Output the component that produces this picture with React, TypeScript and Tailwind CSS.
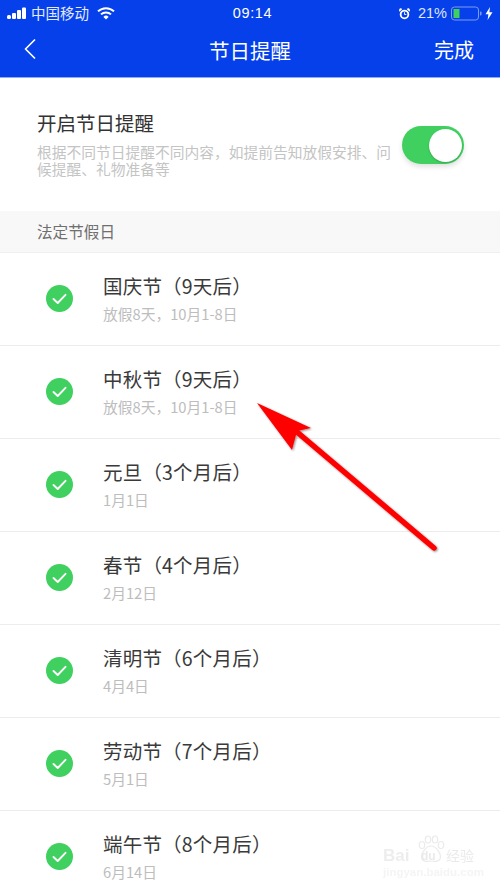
import React from "react";

const rows = [
  ["国庆节（9天后）", "放假8天，10月1-8日"],
  ["中秋节（9天后）", "放假8天，10月1-8日"],
  ["元旦（3个月后）", "1月1日"],
  ["春节（4个月后）", "2月12日"],
  ["清明节（6个月后）", "4月4日"],
  ["劳动节（7个月后）", "5月1日"],
  ["端午节（8个月后）", "6月14日"],
];

function Check() {
  return (
    <svg width="27" height="27" viewBox="0 0 27 27" className="shrink-0 -mt-[2px]">
      <circle cx="13.5" cy="13.5" r="13.5" fill="#3fd05f" />
      <path d="M7.5 14 L11.7 18 L19.5 9.8" fill="none" stroke="#fff" strokeWidth="1.9" strokeLinecap="round" strokeLinejoin="round" />
    </svg>
  );
}

export default function App() {
  return (
    <div
      className="relative w-[500px] h-[889px] overflow-hidden bg-white"
      style={{ fontFamily: '"Noto Sans CJK SC", "Noto Sans", sans-serif' }}
    >
      <header className="h-[78px] bg-[#0540ea] border-b border-[#8fa9f5] text-white flex flex-col">
        <div className="h-[26px] flex items-center justify-between pl-[7px] pr-[7px] pt-px">
          <div className="flex items-center w-[200px]">
            <svg width="20" height="13" viewBox="0 0 20 13" fill="#fff">
              <rect x="0" y="8" width="4" height="4" rx="1.5" />
              <rect x="5" y="6" width="4" height="6" rx="1" />
              <rect x="10" y="3" width="4" height="9" rx="1" />
              <rect x="15" y="0.5" width="4" height="11.5" rx="1" />
            </svg>
            <span className="ml-[4px] text-[14.5px] leading-none text-[#e4eafd]">中国移动</span>
            <svg width="18" height="13" viewBox="0 0 18 13" className="ml-[8px]" fill="none" stroke="#fff" strokeWidth="2">
              <path d="M1 4.4 A11.5 11.5 0 0 1 17 4.4" />
              <path d="M4 7.4 A7.2 7.2 0 0 1 14 7.4" />
              <path d="M9 12.6 L6.4 9.9 A3.6 3.6 0 0 1 11.6 9.9 Z" fill="#fff" stroke="none" />
            </svg>
          </div>
          <span className="text-[14.5px] leading-none tracking-[0.6px] ml-[5px]" style={{ fontFamily: '"Liberation Sans", sans-serif' }}>09:14</span>
          <div className="flex items-center justify-end w-[200px]">
            <svg width="11" height="12" viewBox="0 0 12 13" fill="#fff">
              <circle cx="6" cy="7" r="4.2" fill="none" stroke="#fff" strokeWidth="2" />
              <path d="M6 4.5 V7 H8" stroke="#fff" strokeWidth="1" fill="none" />
              <path d="M0.5 3.5 L3 1 L1 0.8 Z M11.5 3.5 L9 1 L11 0.8 Z" stroke="#fff" />
            </svg>
            <span className="ml-[8px] text-[14.5px] leading-none text-[#dfe6fd]" style={{ fontFamily: '"Liberation Sans", sans-serif' }}>21%</span>
            <svg width="31" height="15" viewBox="0 0 31 15" className="ml-[4px]">
              <rect x="0.5" y="1" width="27" height="13" rx="3" fill="none" stroke="#7f9cf2" />
              <rect x="2.5" y="3" width="6" height="9" fill="#3fd05f" />
              <rect x="29" y="5.5" width="1.5" height="4" rx="0.7" fill="#7f9cf2" />
            </svg>
            <svg width="8" height="13" viewBox="0 0 8 13" fill="#fff" className="ml-[3px]">
              <path d="M5 0 L0.5 7.3 H3.4 L2.6 13 L7.5 5.2 H4.4 Z" />
            </svg>
          </div>
        </div>
        <div className="relative flex-1 flex items-center justify-between pl-[24px] pr-[26px] pb-[3px]">
          <svg width="12" height="20" viewBox="0 0 12 20" fill="none" stroke="#fff" strokeWidth="1.7" strokeLinecap="round" strokeLinejoin="round" className="-mt-[2px]">
            <path d="M10.5 1 L1.5 10 L10.5 19" />
          </svg>
          <span className="absolute left-0 right-0 text-center text-[20.5px] leading-none">节日提醒</span>
          <span className="text-[20px] leading-none">完成</span>
        </div>
      </header>

      <section className="h-[133px] flex items-center pl-[37px] pr-[36px] pb-[3px]">
        <div className="flex-1 min-w-0">
          <div className="text-[19.5px] leading-[26px] text-[#333333]">开启节日提醒</div>
          <p className="mt-[7px] w-[356px] text-[14.75px] leading-[17px] text-[#c4c4c4]">
            根据不同节日提醒不同内容，如提前告知放假安排、问候提醒、礼物准备等
          </p>
        </div>
        <div className="w-[62px] h-[38px] rounded-full bg-[#3fd05f] flex items-center justify-end pr-[2px] shadow-[0_3px_5px_rgba(0,0,0,0.12)] mt-[4px]">
          <div className="w-[33px] h-[33px] rounded-full bg-white shadow-[0_1px_2px_rgba(0,0,0,0.2)]" />
        </div>
      </section>

      <div className="h-[42px] bg-[#f8f8f8] border-b border-[#efefef] flex items-center pl-[37px] text-[15.6px] text-[#6f6f6f]">
        法定节假日
      </div>

      <ul>
        {rows.map(([title, sub]) => (
          <li key={title} className="h-[93px] border-b border-[#ececec] flex items-center pl-[46px]">
            <Check />
            <div className="ml-[30px] -mt-[3px]">
              <div className="text-[19.5px] leading-[26px] tracking-[0.2px] text-[#3a3a3a]">{title}</div>
              <div className="mt-[6px] text-[14.75px] leading-[18px] text-[#bdbdbd]">{sub}</div>
            </div>
          </li>
        ))}
      </ul>

      <svg className="absolute left-0 top-0 pointer-events-none" width="500" height="889" viewBox="0 0 500 889">
        <defs>
          <filter id="s" x="-20%" y="-20%" width="140%" height="140%">
            <feDropShadow dx="1" dy="1" stdDeviation="1.2" floodColor="#000" floodOpacity="0.45" />
          </filter>
        </defs>
        <g filter="url(#s)">
          <path d="M434 548 L297 432" stroke="#fe0000" strokeWidth="5.5" strokeLinecap="round" />
          <path d="M257 403 L311 428 L297 431 L292 450 Z" fill="#fe0000" />
        </g>
      </svg>

      <div className="absolute left-[383px] top-[835px] w-[112px] h-[50px] opacity-70 pointer-events-none">
        <svg className="absolute left-[32px] top-0" width="32" height="30" viewBox="0 0 32 30" fill="none" stroke="#e2e2e2" strokeWidth="1.2">
          <ellipse cx="7" cy="10" rx="2.7" ry="3.5" />
          <ellipse cx="13" cy="4.5" rx="2.7" ry="3.5" />
          <ellipse cx="20" cy="4.5" rx="2.7" ry="3.5" />
          <ellipse cx="26" cy="10" rx="2.7" ry="3.5" />
          <path d="M16 11 C21 11 27 19 25 24 C23 28 19 26 16 26 C13 26 9 28 7 24 C5 19 11 11 16 11 Z" />
        </svg>
        <span className="absolute left-0 top-[12px] text-[17px] leading-none font-bold text-[#e6e6e6]" style={{ fontFamily: '"Liberation Sans", sans-serif' }}>Bai</span>
        <span className="absolute left-[38px] top-[15px] text-[12px] leading-none font-bold text-[#e2e2e2]" style={{ fontFamily: '"Liberation Sans", sans-serif' }}>du</span>
        <span className="absolute left-[63px] top-[13px] text-[14px] leading-none text-[#e2e2e2]">经验</span>
        <span className="absolute left-0 top-[32px] text-[11.5px] leading-none font-bold text-[#f0f0f0]" style={{ fontFamily: '"Liberation Sans", sans-serif' }}>jingyan.baidu.com</span>
      </div>
    </div>
  );
}
